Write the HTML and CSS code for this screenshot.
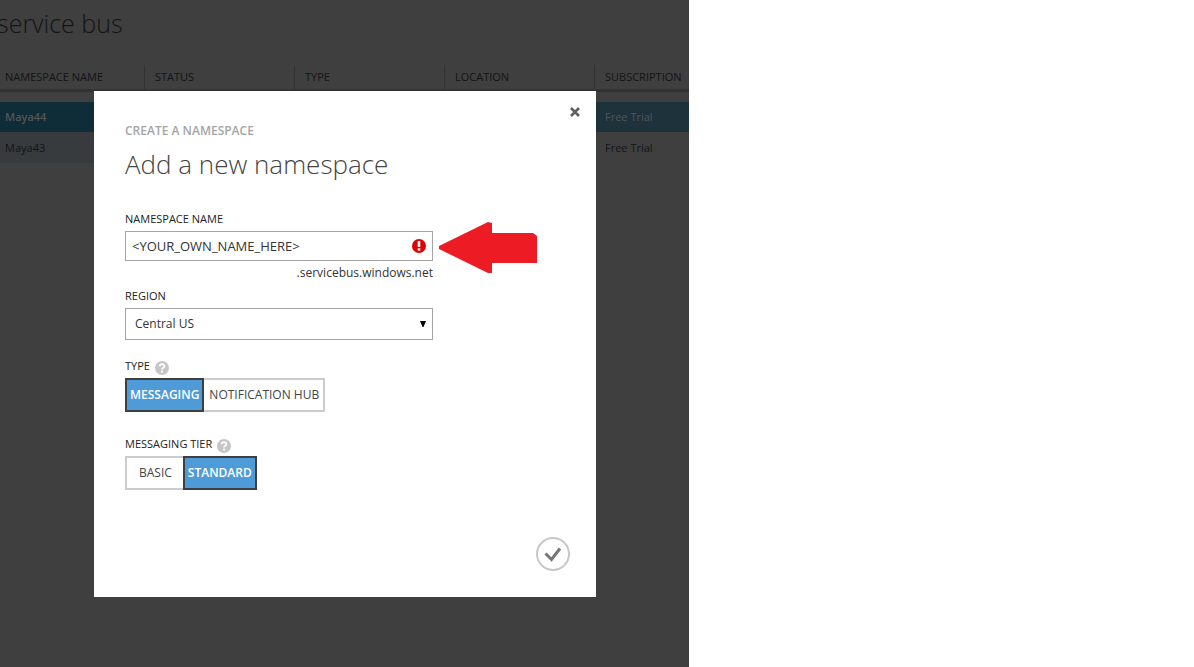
FILE: index.html
```html
<!DOCTYPE html>
<html lang="en">
<head>
<meta charset="utf-8">
<title>Service Bus - Add a new namespace</title>
<link rel="stylesheet" href="styles.css">
</head>
<body>
<div class="page">
  <main class="portal">
    <h1 class="portal-title">service bus</h1>
    <table class="grid">
      <colgroup><col class="col-name"><col class="col"><col class="col"><col class="col"><col></colgroup>
      <thead>
        <tr><th>NAMESPACE NAME</th><th>STATUS</th><th>TYPE</th><th>LOCATION</th><th>SUBSCRIPTION</th></tr>
      </thead>
      <tbody>
        <tr class="gap"><td colspan="5"></td></tr>
        <tr class="selected"><td>Maya44</td><td></td><td></td><td></td><td>Free Trial</td></tr>
        <tr class="row"><td>Maya43</td><td></td><td></td><td></td><td>Free Trial</td></tr>
      </tbody>
    </table>
    <div class="overlay">
      <section class="dialog" role="dialog" aria-labelledby="dialog-title">
        <button class="close" type="button" aria-label="Close">
          <svg width="10" height="10" viewBox="0 0 10 10"><path d="M1 1l8 8M9 1l-8 8" stroke="#606060" stroke-width="2.600"/></svg>
        </button>
        <p class="eyebrow">CREATE A NAMESPACE</p>
        <h2 class="dialog-title" id="dialog-title">Add a new namespace</h2>
        <form class="form">
          <div class="field">
            <label class="label" for="name">NAMESPACE NAME</label>
            <div class="control">
              <input class="input" id="name" type="text" value="&lt;YOUR_OWN_NAME_HERE&gt;">
              <svg class="error" width="14" height="14" viewBox="0 0 14 14"><circle cx="7" cy="7" r="7" fill="#e00000"/><path d="M5.700 2h2.600v6H5.700z" fill="#fff"/><path d="M5.700 9.300h2.600v2.400H5.700z" fill="#fff"/></svg>
              <svg class="pointer" width="99" height="52" viewBox="0 0 99 52"><path d="M0 24v3L49 51h4V41H98V14L94 11H53V1L49 0z" fill="#ed1c24"/></svg>
            </div>
            <p class="suffix">.servicebus.windows.net</p>
          </div>
          <div class="field">
            <label class="label" for="region">REGION</label>
            <div class="control">
              <select class="select" id="region"><option>Central US</option></select>
              <svg class="caret" width="6" height="6" viewBox="0 0 6 6"><path d="M0 0h6L3.500 6h-1z" fill="#000"/></svg>
            </div>
          </div>
          <div class="field choice">
            <div class="label" id="type">TYPE
              <svg class="help" width="14" height="14" viewBox="0 0 14 14"><circle cx="7" cy="7" r="7" fill="#c6c6c6"/><path d="M4.700 5.300C4.700 2.500 9.400 2.500 9.400 5.200 9.400 6.800 7 6.900 7 8.500" fill="none" stroke="#fff" stroke-width="1.800"/><circle cx="7" cy="10.700" r="1.100" fill="#fff"/></svg>
            </div>
            <div class="toggle" role="group" aria-labelledby="type">
              <button class="option on" type="button" aria-pressed="true">MESSAGING</button>
              <button class="option" type="button" aria-pressed="false">NOTIFICATION HUB</button>
            </div>
          </div>
          <div class="field choice">
            <div class="label" id="tier">MESSAGING TIER
              <svg class="help" width="14" height="14" viewBox="0 0 14 14"><circle cx="7" cy="7" r="7" fill="#c6c6c6"/><path d="M4.700 5.300C4.700 2.500 9.400 2.500 9.400 5.200 9.400 6.800 7 6.900 7 8.500" fill="none" stroke="#fff" stroke-width="1.800"/><circle cx="7" cy="10.700" r="1.100" fill="#fff"/></svg>
            </div>
            <div class="toggle" role="group" aria-labelledby="tier">
              <button class="option short" type="button" aria-pressed="false">BASIC</button>
              <button class="option on" type="button" aria-pressed="true">STANDARD</button>
            </div>
          </div>
        </form>
        <div class="actions">
          <button class="confirm" type="button" aria-label="Create">
            <svg width="34" height="34" viewBox="0 0 34 34"><circle cx="17" cy="17" r="16" fill="none" stroke="#c8c8c8" stroke-width="2"/><path d="M9.500 16.500l6 6L24 11.500" fill="none" stroke="#777" stroke-width="3"/></svg>
          </button>
        </div>
      </section>
    </div>
  </main>
</div>
</body>
</html>
```
FILE: styles.css
```css
* { box-sizing: border-box; }
body { margin: 0; background: #fff; color: #333; font: 12px/16px "Open Sans", "Noto Sans", sans-serif; }
h1, h2, p { margin: 0; }
svg { display: block; }
button { font: inherit; cursor: pointer; }

.page { display: grid; grid-template-columns: 689fr 505fr; min-height: 100vh; }
.portal { position: relative; overflow: hidden; background: #3f3f3f; color: #141414; }
.portal-title { margin: 3px 0 22px -3px; font-size: 25px; line-height: 40px; font-weight: 300; }

.grid { width: 100%; table-layout: fixed; border-collapse: separate; border-spacing: 0; font-size: 11px; }
.col-name { width: 145px; }
.col { width: 150px; }
.grid th { height: 27px; padding: 0 0 0 10px; border-right: 1px solid #323232; border-bottom: 3px solid #343232; font-weight: 400; text-align: left; white-space: nowrap; }
.grid td { padding: 0 0 0 10px; }
.grid th:first-child, .grid td:first-child { padding-left: 5px; }
.grid th:last-child { border-right: 0; }
.grid .gap td { height: 10px; }
.selected td { height: 30px; background: #1d323b; color: #555; }
.selected td:first-child { background: #0f2c39; font-weight: 600; }
.row td { height: 31px; }
.row td:first-child { background: #373b3e; }

.overlay { position: absolute; inset: 0; padding: 91px 93px 70px 94px; }
.dialog { position: relative; padding: 30px 26px 26px 31px; background: #fff; color: #333; }
.close { position: absolute; top: 16px; right: 16px; padding: 0; border: 0; background: none; }
.eyebrow { line-height: 20px; font-weight: 600; color: #a5a5a5; }
.dialog-title { margin-top: 3px; font-size: 26px; line-height: 40px; font-weight: 300; color: #444; }

.form { display: grid; width: 308px; margin-top: 23px; }
.label { display: flex; align-items: center; gap: 5px; height: 24px; font-size: 11px; color: #222; }
.help { margin-top: 3px; }
.control { position: relative; }
.input, .select { display: block; width: 100%; border: 1px solid #a5a5a5; border-radius: 0; outline: 0; background: #fff; color: #333; font: inherit; }
.input { height: 30px; padding: 0 30px 0 6px; font-size: 13px; }
.select { height: 32px; padding: 0 20px 0 9px; appearance: none; }
.error { position: absolute; top: 8px; right: 7px; }
.pointer { position: absolute; top: -9px; left: 314px; }
.caret { position: absolute; top: 13px; right: 7px; pointer-events: none; }
.suffix { height: 23px; line-height: 23px; text-align: right; }
.choice { padding-top: 14px; }
.choice + .choice { padding-top: 20px; }
.toggle { display: flex; }
.option { height: 34px; padding: 0 3px; border: 2px solid #ccc; background: #fff; color: #444; }
.option.short { padding: 0 11px 0 12px; }
.option:first-child { border-right: 0; }
.option:last-child { border-left: 0; }
.option.on { border: 2px solid #3f3f3f; background: #4e9bd8; color: #fff; font-weight: 600; }
.option:not(.on):last-child { padding: 0 4px 0 5px; }
.actions { display: flex; justify-content: flex-end; margin-top: 47px; }
.confirm { padding: 0; border: 0; background: none; }
```
